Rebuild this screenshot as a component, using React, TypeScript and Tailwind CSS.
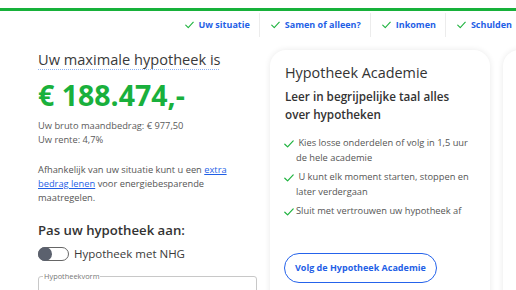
import React from "react";

const Check = ({ className = "" }: { className?: string }) => (
  <svg viewBox="0 0 10 8" className={className} fill="none">
    <path d="M0.8 4.2 L3.6 6.9 L9.2 0.9" stroke="#1fb33f" strokeWidth="1.2" strokeLinecap="round" strokeLinejoin="round" />
  </svg>
);

const navItems = ["Uw situatie", "Samen of alleen?", "Inkomen", "Schulden"];

const listItems = [
  "\u00a0Kies losse onderdelen of volg in 1,5 uur de hele academie",
  "\u00a0U kunt elk moment starten, stoppen en later verdergaan",
  "Sluit met vertrouwen uw hypotheek af",
];

export default function App() {
  return (
    <div className="w-[516px] h-[290px] overflow-hidden bg-white font-['Open_Sans',sans-serif] text-[#333]">
      <div className="h-[3px] mt-[8px] bg-[#17b13a]" />
      <nav className="flex justify-end h-[24px] mt-[2px]">
        {navItems.map((t, i) => (
          <div
            key={t}
            className={`flex items-center gap-[5px] pl-[11px] ${i > 0 ? "border-l border-[#ececec]" : ""} ${i === navItems.length - 1 ? "pr-[4px]" : "pr-[9px]"}`}
          >
            <Check className="w-[9px] h-[8px]" />
            <span className="text-[9px] font-bold text-[#1f5fe6] whitespace-nowrap">{t}</span>
          </div>
        ))}
      </nav>
      <div className="flex gap-[13px] pl-[38px] mt-[13px]">
        <div className="w-[219px] shrink-0">
          <h1 className="text-[14.6px] leading-[19px] text-[#3a3a3a]">
            <span className="underline decoration-dotted decoration-[#8fb4f5] underline-offset-[4px] decoration-1">
              Uw maximale hypotheek is
            </span>
          </h1>
          <div className="text-[28.5px] leading-[32px] font-bold text-[#19b03c] mt-[10px]">€ 188.474,-</div>
          <div className="mt-[8px] text-[9.3px] leading-[13.5px] text-[#5a5a5a]">
            <div>Uw bruto maandbedrag: € 977,50</div>
            <div>Uw rente: 4,7%</div>
          </div>
          <p className="mt-[17px] text-[9.3px] leading-[14px] text-[#555]">
            Afhankelijk van uw situatie kunt u een{" "}
            <a className="text-[#1f5fe6] underline">extra bedrag lenen</a> voor energiebesparende maatregelen.
          </p>
          <h2 className="mt-[15px] text-[13.2px] leading-[20px] font-semibold text-[#333]">Pas uw hypotheek aan:</h2>
          <div className="flex items-center gap-[5px] mt-[4px] h-[20px]">
            <div className="w-[31px] h-[14px] rounded-full border border-[#666] flex items-center">
              <div className="w-[14px] h-[14px] rounded-full bg-[#5b616e] -ml-[1px]" />
            </div>
            <span className="text-[11.5px] text-[#3a3a3a]">Hypotheek met NHG</span>
          </div>
          <fieldset className="mt-[8px] h-[40px] border border-[#c8c8c8] rounded-[3px] px-[4px]">
            <legend className="text-[7.4px] leading-[8px] text-[#777] px-[1px]">Hypotheekvorm</legend>
          </fieldset>
        </div>
        {[0, 1].map((k) => (
          <div
            key={k}
            className="w-[220px] shrink-0 h-[260px] rounded-[16px] bg-white shadow-[0_0_6px_rgba(0,0,0,0.09)] pt-[13px] pl-[15px] pr-[16px]"
          >
            {k === 0 && (
              <>
                <h3 className="text-[14.4px] leading-[20px] text-[#333]">Hypotheek Academie</h3>
                <p className="mt-[5px] text-[11.7px] leading-[17.5px] font-semibold text-[#333]">
                  Leer in begrijpelijke taal alles over hypotheken
                </p>
                <ul className="mt-[13px] flex flex-col gap-[5px]">
                  {listItems.map((t) => (
                    <li key={t} className="flex gap-[2px] text-[9.3px] leading-[14.5px] text-[#555]">
                      <Check className="w-[10px] h-[8px] mt-[4px] shrink-0 -ml-[1px]" />
                      <span>{t}</span>
                    </li>
                  ))}
                </ul>
                <button className="mt-[34px] -ml-[1px] h-[30px] px-[10px] rounded-full border-[1.5px] border-[#2563eb] text-[9px] font-bold text-[#1f5fe6]">
                  Volg de Hypotheek Academie
                </button>
              </>
            )}
          </div>
        ))}
      </div>
    </div>
  );
}
